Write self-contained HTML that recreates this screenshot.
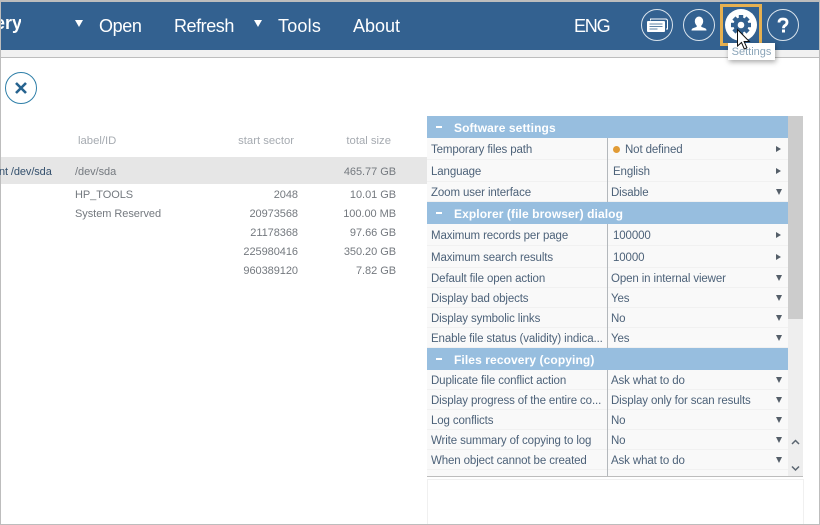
<!DOCTYPE html>
<html><head><meta charset="utf-8">
<style>
html,body{margin:0;padding:0;background:#fff}
#p{position:relative;width:820px;height:525px;overflow:hidden;background:#fff;font-family:"Liberation Sans",sans-serif;color:#4b6075}
#p div,#p span.a{position:absolute;white-space:nowrap}
.t{font-size:11.5px;line-height:16px;letter-spacing:-.1px}
.m{font-size:18px;line-height:24px;color:#fff;top:14px}
.h{left:427px;width:361px;background:#97bedf;height:22px}
.h b{position:absolute;left:27px;top:4px;font-size:12px;line-height:16px;color:#fff;letter-spacing:.1px}
.h i{position:absolute;left:9px;top:10px;width:6px;height:2px;background:#fff}
.r{left:427px;width:361px;background:#f9f9f9;border-bottom:1px solid #f1f1f1;box-sizing:border-box}
.r .l{left:4px;font-size:11.5px;line-height:16px;color:#4d6279;letter-spacing:-.12px}
.r .v{left:184px;font-size:11.5px;line-height:16px;color:#4d6279;letter-spacing:-.12px}
.r .d{left:180px;top:0;bottom:-1px;width:1px;background:#b4b8bc}
.ad{left:349px;width:0;height:0;border-left:3px solid transparent;border-right:3px solid transparent;border-top:6px solid #555f69}
.ar{left:349px;width:0;height:0;border-top:3px solid transparent;border-bottom:3px solid transparent;border-left:5px solid #555f69}
.g{color:#a6abb1;font-size:11.3px;line-height:16px}
.c{color:#74797f;font-size:11px;line-height:16px;letter-spacing:-.05px}
.tr{text-align:right}
</style></head><body><div id="p">
<div style="left:0;top:0;width:820px;height:2px;background:#bdbdbd"></div>
<div style="left:1px;top:2px;width:819px;height:48px;background:#336190"></div>
<div style="left:1px;top:50px;width:819px;height:7px;background:#f1f1f1"></div>
<div style="left:0;top:57px;width:820px;height:1px;background:#bdbdbd"></div>
<div style="left:0;top:0;width:1px;height:525px;background:#bdbdbd"></div>
<div style="left:819px;top:0;width:1px;height:525px;background:#bdbdbd"></div>
<div style="left:0;top:524px;width:820px;height:1px;background:#bdbdbd"></div>

<div class="m" style="left:1px;top:11px;width:20px;overflow:hidden;font-weight:bold"><span style="margin-left:-6px">ery</span></div>
<div style="left:75px;top:20px;width:0;height:0;border-left:4px solid transparent;border-right:4px solid transparent;border-top:7px solid #fff"></div>
<div class="m" style="left:99px;letter-spacing:-.4px">Open</div>
<div class="m" style="left:174px;letter-spacing:-.45px">Refresh</div>
<div style="left:254px;top:20px;width:0;height:0;border-left:4px solid transparent;border-right:4px solid transparent;border-top:7px solid #fff"></div>
<div class="m" style="left:278px;letter-spacing:.2px">Tools</div>
<div class="m" style="left:353px">About</div>
<div class="m" style="left:574px;letter-spacing:-1.2px">ENG</div>

<svg style="position:absolute;left:640px;top:7px" width="170" height="36" viewBox="640 7 170 36">
<circle cx="657" cy="25" r="15.5" fill="none" stroke="#d9e3ec" stroke-width="1"/>
<path d="M650.500 20.500v-1.500h15q2 0 2 2v8h-1.500" fill="none" stroke="#fff" stroke-width="1"/>
<rect x="647" y="21" width="18" height="11" rx="1" fill="#fff"/>
<path d="M649.500 24h13M649.500 26.500h13M649.500 29h8" stroke="#5f83a6" stroke-width="1"/>
<circle cx="699" cy="25" r="15.500" fill="none" stroke="#d9e3ec" stroke-width="1"/>
<path d="M699 16.500a4.200 4.800 0 0 1 4.200 4.800c0 1.800-.9 3.400-1.900 4.300v1.300l3.800 1.300q1.400.5 1.400 2.300H691.500q0-1.800 1.400-2.300l3.800-1.300v-1.300c-1-.9-1.900-2.500-1.900-4.300A4.200 4.800 0 0 1 699 16.500z" fill="#fff"/>
<circle cx="741" cy="25" r="16" fill="#fff"/>
<g transform="translate(741 25)" fill="#336190">
<circle r="7.500"/>
<g id="t"><rect x="-2.200" y="-10" width="4.400" height="4"/><rect x="-2.200" y="6" width="4.400" height="4"/></g>
<rect x="-2.200" y="-10" width="4.400" height="4" transform="rotate(45)"/><rect x="-2.200" y="6" width="4.400" height="4" transform="rotate(45)"/>
<rect x="-2.200" y="-10" width="4.400" height="4" transform="rotate(90)"/><rect x="-2.200" y="6" width="4.400" height="4" transform="rotate(90)"/>
<rect x="-2.200" y="-10" width="4.400" height="4" transform="rotate(135)"/><rect x="-2.200" y="6" width="4.400" height="4" transform="rotate(135)"/>
<circle r="3.300" fill="#fff"/>
</g>
<circle cx="783" cy="25" r="15.500" fill="none" stroke="#d9e3ec" stroke-width="1"/>
<path d="M779 22.500q0-3.500 4-3.500 4 0 4 3.300 0 2-2 3.200-1.500.9-1.500 2.700" fill="none" stroke="#fff" stroke-width="2.800"/>
<rect x="782" y="29.500" width="3" height="3" fill="#fff"/>
</svg>
<div style="left:720px;top:4px;width:36px;height:36px;border:3px solid #e6b050"></div>

<div style="left:728px;top:43px;width:47px;height:17px;background:#fff;box-shadow:1px 2px 5px rgba(0,0,0,.35);font-size:11px;line-height:18px;color:#8aa4b8;text-align:center">Settings</div>
<svg style="position:absolute;left:735px;top:28px" width="16" height="24" viewBox="0 0 16 24">
<path d="M2.500 1.500V18l4-3.500 2.800 6.500 2.600-1.200-2.800-6.300h5.200z" fill="#fff" stroke="#111" stroke-width="1"/>
</svg>

<svg style="position:absolute;left:4px;top:71px" width="34" height="34" viewBox="0 0 34 34">
<circle cx="17" cy="17" r="15.500" fill="#fff" stroke="#2f7fa8" stroke-width="1"/>
<path d="M12 12l10 10M22 12l-10 10" stroke="#26638f" stroke-width="2.600"/>
</svg>

<div class="g" style="left:78px;top:133px">label/ID</div>
<div class="g tr" style="left:194px;top:133px;width:100px">start sector</div>
<div class="g tr" style="left:291px;top:133px;width:100px">total size</div>
<div style="left:1px;top:157px;width:426px;height:27px;background:#e6e6e6"></div>
<div class="t" style="left:0;top:164px;width:54px;overflow:hidden;color:#34506d;font-size:11px"><span style="margin-left:-1px">nt /dev/sda</span></div>
<div class="c" style="left:75px;top:164px">/dev/sda</div>
<div class="c tr" style="left:296px;top:164px;width:100px">465.77 GB</div>
<div class="c" style="left:75px;top:187px">HP_TOOLS</div>
<div class="c tr" style="left:198px;top:187px;width:100px">2048</div>
<div class="c tr" style="left:296px;top:187px;width:100px">10.01 GB</div>
<div class="c" style="left:75px;top:206px">System Reserved</div>
<div class="c tr" style="left:198px;top:206px;width:100px">20973568</div>
<div class="c tr" style="left:296px;top:206px;width:100px">100.00 MB</div>
<div class="c tr" style="left:198px;top:225px;width:100px">21178368</div>
<div class="c tr" style="left:296px;top:225px;width:100px">97.66 GB</div>
<div class="c tr" style="left:198px;top:244px;width:100px">225980416</div>
<div class="c tr" style="left:296px;top:244px;width:100px">350.20 GB</div>
<div class="c tr" style="left:198px;top:263px;width:100px">960389120</div>
<div class="c tr" style="left:296px;top:263px;width:100px">7.82 GB</div>

<div class="h" style="top:116px"><i></i><b>Software settings</b></div>
<div class="r" style="top:138px;height:22px"><div class="d"></div><div class="l" style="top:4px">Temporary files path</div><div style="left:186px;top:8px;width:7px;height:7px;border-radius:50%;background:#e19b35"></div><div class="v" style="left:198px;top:4px">Not defined</div><div class="ar" style="top:8px"></div></div>
<div class="r" style="top:160px;height:22px"><div class="d"></div><div class="l" style="top:4px">Language</div><div class="v" style="left:186px;top:4px">English</div><div class="ar" style="top:8px"></div></div>
<div class="r" style="top:182px;height:20px"><div class="d"></div><div class="l" style="top:3px">Zoom user interface</div><div class="v" style="top:3px">Disable</div><div class="ad" style="top:7px"></div></div>
<div class="h" style="top:202px"><i></i><b>Explorer (file browser) dialog</b></div>
<div class="r" style="top:224px;height:22px"><div class="d"></div><div class="l" style="top:4px">Maximum records per page</div><div class="v" style="left:186px;top:4px">100000</div><div class="ar" style="top:8px"></div></div>
<div class="r" style="top:246px;height:22px"><div class="d"></div><div class="l" style="top:4px">Maximum search results</div><div class="v" style="left:186px;top:4px">10000</div><div class="ar" style="top:8px"></div></div>
<div class="r" style="top:268px;height:20px"><div class="d"></div><div class="l" style="top:3px">Default file open action</div><div class="v" style="top:3px">Open in internal viewer</div><div class="ad" style="top:7px"></div></div>
<div class="r" style="top:288px;height:20px"><div class="d"></div><div class="l" style="top:3px">Display bad objects</div><div class="v" style="top:3px">Yes</div><div class="ad" style="top:7px"></div></div>
<div class="r" style="top:308px;height:20px"><div class="d"></div><div class="l" style="top:3px">Display symbolic links</div><div class="v" style="top:3px">No</div><div class="ad" style="top:7px"></div></div>
<div class="r" style="top:328px;height:20px"><div class="d"></div><div class="l" style="top:3px">Enable file status (validity) indica...</div><div class="v" style="top:3px">Yes</div><div class="ad" style="top:7px"></div></div>
<div class="h" style="top:348px"><i></i><b>Files recovery (copying)</b></div>
<div class="r" style="top:370px;height:20px"><div class="d"></div><div class="l" style="top:3px">Duplicate file conflict action</div><div class="v" style="top:3px">Ask what to do</div><div class="ad" style="top:7px"></div></div>
<div class="r" style="top:390px;height:20px"><div class="d"></div><div class="l" style="top:3px">Display progress of the entire co...</div><div class="v" style="top:3px">Display only for scan results</div><div class="ad" style="top:7px"></div></div>
<div class="r" style="top:410px;height:20px"><div class="d"></div><div class="l" style="top:3px">Log conflicts</div><div class="v" style="top:3px">No</div><div class="ad" style="top:7px"></div></div>
<div class="r" style="top:430px;height:20px"><div class="d"></div><div class="l" style="top:3px">Write summary of copying to log</div><div class="v" style="top:3px">No</div><div class="ad" style="top:7px"></div></div>
<div class="r" style="top:450px;height:20px"><div class="d"></div><div class="l" style="top:3px">When object cannot be created</div><div class="v" style="top:3px">Ask what to do</div><div class="ad" style="top:7px"></div></div>
<div class="r" style="top:470px;height:6px;border:0"><div class="d"></div></div>

<div style="left:788px;top:116px;width:15px;height:360px;background:#eeeeee"></div>
<div style="left:788px;top:116px;width:15px;height:203px;background:#cccccc"></div>
<svg style="position:absolute;left:788px;top:434px" width="15" height="40" viewBox="0 0 15 40">
<path d="M4 10l3.500-3.500L11 10M4 32.500l3.500 3.500L11 32.500" fill="none" stroke="#5a6570" stroke-width="1.500"/>
</svg>
<div style="left:427px;top:476px;width:376px;height:1px;background:#bdbdbd"></div>
<div style="left:427px;top:479px;width:375px;height:46px;border:1px solid #f0f0f0;border-bottom:0"></div>
<div style="left:0;top:524px;width:820px;height:1px;background:#bdbdbd"></div>
</div></body></html>
